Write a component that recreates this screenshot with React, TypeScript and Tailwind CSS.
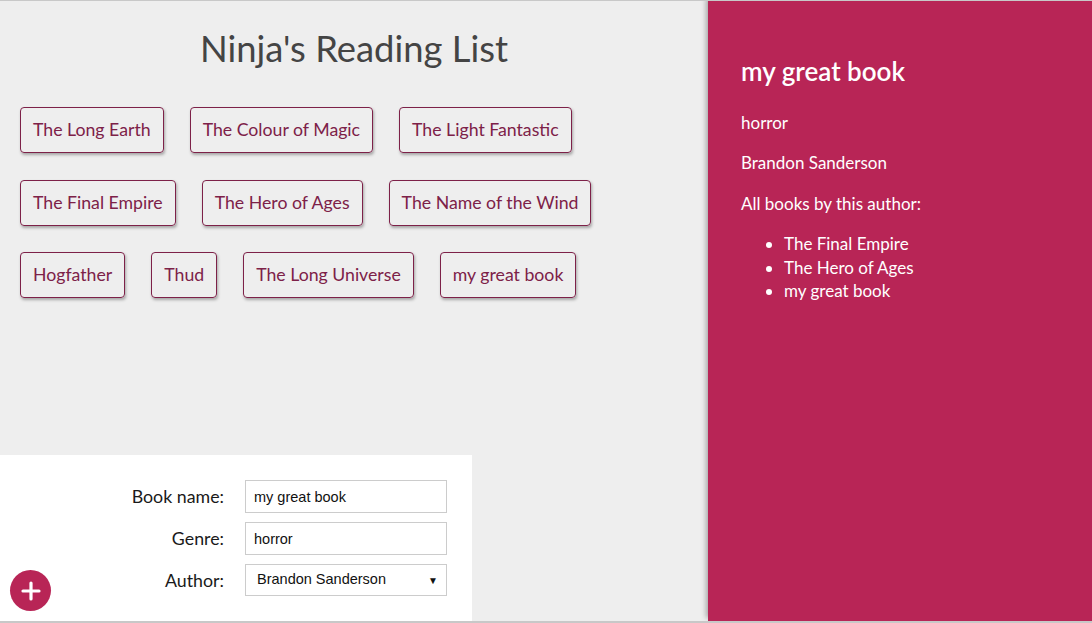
import React from "react"

const books = [
    ["The Long Earth", "The Colour of Magic", "The Light Fantastic"],
    ["The Final Empire", "The Hero of Ages", "The Name of the Wind"],
    ["Hogfather", "Thud", "The Long Universe", "my great book"],
]

const font = { fontFamily: "Lato, 'Noto Sans', sans-serif" }
const arial = { fontFamily: "'Liberation Sans', Arial, sans-serif" }

function BookList() {
    return (
        <div className="flex flex-col gap-[26.5px] pl-5 pt-[39px]">
            {books.map((row, i) => (
                <ul key={i} className="flex gap-[26px]">
                    {row.map((b) => (
                        <li
                            key={b}
                            className="cursor-pointer rounded border border-[#7d2148] px-[12px] py-[10px] text-[17.7px] leading-6 text-[#7d2148] shadow-[1px_2px_3px_rgba(0,0,0,0.3)]"
                        >
                            {b}
                        </li>
                    ))}
                </ul>
            ))}
        </div>
    )
}

function Field({ label, children }: { label: string; children: React.ReactNode }) {
    return (
        <div className="flex items-center gap-[21px]">
            <label className="w-[224px] text-right text-[17.8px] text-[#1a1a1a]">{label}</label>
            {children}
        </div>
    )
}

function AddBook() {
    const input =
        "h-[33px] w-[202px] border border-[#ccc] bg-white px-2 text-[14.5px] text-[#111] outline-none"
    return (
        <form className="relative mt-auto flex h-[166px] w-[472px] flex-col gap-[9px] bg-white pt-[25px]">
            <Field label="Book name:">
                <input className={input} style={arial} defaultValue="my great book" />
            </Field>
            <Field label="Genre:">
                <input className={input} style={arial} defaultValue="horror" />
            </Field>
            <Field label="Author:">
                <div
                    className="flex h-[32px] w-[202px] items-center justify-between border border-[#ccc] bg-white pl-[11px] pr-2 text-[14.5px] text-[#111]"
                    style={arial}
                >
                    <span>Brandon Sanderson</span>
                    <span className="text-[10px]">▼</span>
                </div>
            </Field>
            <button
                type="button"
                className="absolute bottom-[10px] left-[10px] flex h-[41px] w-[41px] items-center justify-center rounded-full bg-[#b82556]"
            >
                <svg width="20" height="20" viewBox="0 0 20 20">
                    <path d="M10 2v16M2 10h16" stroke="#fff" strokeWidth="3.2" strokeLinecap="round" />
                </svg>
            </button>
        </form>
    )
}

function BookDetails() {
    return (
        <div className="relative z-10 h-full w-[384px] bg-[#b82556] px-[33px] pt-[54px] text-white shadow-[-2px_-3px_5px_rgba(0,0,0,0.3)]">
            <h2 className="text-[26px] font-semibold leading-8">my great book</h2>
            <p className="mt-[24px] text-[17px] leading-6">horror</p>
            <p className="mt-[16px] text-[17px] leading-6">Brandon Sanderson</p>
            <p className="mt-[17px] text-[17px] leading-6">All books by this author:</p>
            <ul className="mt-[16px] list-disc pl-[43px] text-[17px] leading-[23.5px]">
                <li>The Final Empire</li>
                <li>The Hero of Ages</li>
                <li>my great book</li>
            </ul>
        </div>
    )
}

export default function App() {
    return (
        <div className="flex h-[623px] w-[1092px] overflow-hidden border-t border-b-2 border-[#c8c8c8] bg-[#eeeeee]" style={font}>
            <div className="flex w-[708px] flex-col">
                <h1 className="pt-[27px] text-center text-[36.4px] leading-10 text-[#444]">Ninja's Reading List</h1>
                <BookList />
                <AddBook />
            </div>
            <BookDetails />
        </div>
    )
}
